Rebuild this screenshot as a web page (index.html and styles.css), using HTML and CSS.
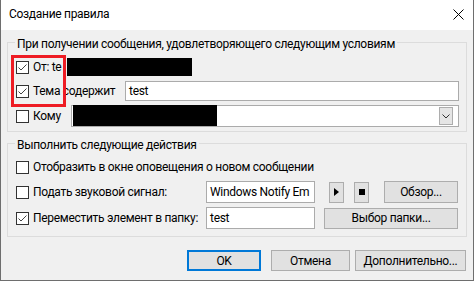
FILE: index.html
```html
<!DOCTYPE html>
<html lang="ru">
<head>
<meta charset="utf-8">
<title>Создание правила</title>
<link rel="stylesheet" href="styles.css">
</head>
<body>
<div class="window">
  <div class="titlebar">
    <span class="title">Создание правила</span>
    <svg class="close" width="11" height="11" viewBox="0 0 11 11"><path d="M0.5 0.5 L10.5 10.5 M10.5 0.5 L0.5 10.5" stroke="#000" stroke-width="1" fill="none"/></svg>
  </div>
  <div class="content">
    <fieldset class="group g1">
      <legend>При получении сообщения, удовлетворяющего следующим условиям</legend>
      <div class="rows">
        <div class="row r1">
          <label class="check w-from"><span class="box"><svg width="11" height="11" viewBox="0 0 11 11"><path d="M1.5 5.5 L4 8 L9.5 2.5" stroke="#444" stroke-width="1" fill="none"/></svg></span><span>От: te</span></label>
          <span class="redact redact-from"></span>
        </div>
        <div class="row r2">
          <label class="check w-subj"><span class="box"><svg width="11" height="11" viewBox="0 0 11 11"><path d="M1.5 5.5 L4 8 L9.5 2.5" stroke="#444" stroke-width="1" fill="none"/></svg></span><span>Тема содержит</span></label>
          <div class="textbox grow">test</div>
        </div>
        <div class="row r3">
          <label class="check w-to"><span class="box"></span><span>Кому</span></label>
          <div class="combo">
            <span class="redact redact-to"></span>
            <span class="drop"><svg width="8" height="5" viewBox="0 0 8 5"><path d="M0.5 0.5 L4 4 L7.5 0.5" stroke="#333" stroke-width="1" fill="none"/></svg></span>
          </div>
        </div>
        <div class="highlight"></div>
      </div>
    </fieldset>

    <fieldset class="group g2">
      <legend>Выполнить следующие действия</legend>
      <div class="rows">
        <div class="row a1">
          <label class="check"><span class="box"></span><span>Отобразить в окне оповещения о новом сообщении</span></label>
        </div>
        <div class="row a2">
          <label class="check w-act"><span class="box"></span><span>Подать звуковой сигнал:</span></label>
          <div class="textbox small">Windows Notify Em</div>
          <button class="btn mini play"><svg width="5" height="8" viewBox="0 0 5 8"><path d="M0 0 L5 4 L0 8 Z" fill="#000"/></svg></button>
          <button class="btn mini stop"><svg width="6" height="6" viewBox="0 0 6 6"><rect width="6" height="6" fill="#000"/></svg></button>
          <button class="btn browse">Обзор...</button>
        </div>
        <div class="row a3">
          <label class="check w-act"><span class="box"><svg width="11" height="11" viewBox="0 0 11 11"><path d="M1.5 5.5 L4 8 L9.5 2.5" stroke="#444" stroke-width="1" fill="none"/></svg></span><span>Переместить элемент в папку:</span></label>
          <div class="textbox small">test</div>
          <button class="btn folder">Выбор папки...</button>
        </div>
      </div>
    </fieldset>

    <div class="footer">
      <button class="btn ok">OK</button>
      <button class="btn cancel">Отмена</button>
      <button class="btn more">Дополнительно...</button>
    </div>
  </div>
</div>
</body>
</html>
```
FILE: styles.css
```css
* { box-sizing: border-box; }
html, body { margin: 0; padding: 0; }
body {
  width: 474px;
  height: 281px;
  overflow: hidden;
  background: #ffffff;
  font-family: Roboto, "Noto Sans", sans-serif;
  font-size: 12px;
  letter-spacing: -0.3px;
  color: #000;
}
.window {
  width: 474px;
  height: 281px;
  border: 1px solid #6e6e6e;
  border-top: none;
  background: #f0f0f0;
  display: flex;
  flex-direction: column;
}
.titlebar {
  height: 30px;
  flex: none;
  background: #ffffff;
  display: flex;
  align-items: center;
  justify-content: space-between;
  padding: 0 9px 1px 8px;
}
.title { line-height: 15px; }
.close { display: block; }

.content {
  flex: 1;
  padding: 2px 6px 0 6px;
  display: flex;
  flex-direction: column;
}
.group {
  margin: 0;
  min-width: 0;
  border: 1px solid #dcdcdc;
  padding: 6px 7px 4px 8px;
}
.group legend {
  padding: 5px 2px 0 2px;
  margin-left: -1px;
  line-height: 15px;
}
.g2 { margin-top: 1px; padding-top: 4px; padding-bottom: 7px; }
.rows { position: relative; display: flex; flex-direction: column; }
.row { display: flex; align-items: center; }
.r1 { height: 18px; margin-bottom: 5px; }
.r2 { height: 20px; margin-bottom: 4px; }
.r3 { height: 22px; }
.a1 { height: 20px; margin-bottom: 4px; }
.a2 { height: 22px; margin-bottom: 4px; }
.a3 { height: 22px; }

.check { display: flex; align-items: center; gap: 4px; flex: none; white-space: nowrap; }
.box {
  width: 13px; height: 13px; flex: none;
  border: 1px solid #333;
  background: #fff;
  display: block;
}
.box svg { display: block; }
.w-from { width: 51px; overflow: hidden; }
.w-subj { width: 109px; }
.w-to { width: 55px; }
.w-act { width: 190px; }

.redact { display: block; background: #000; flex: none; }
.redact-from { width: 125px; height: 18px; }
.redact-to { width: 144px; height: 21px; margin-left: 1px; margin-top: -1px; align-self: flex-start; }

.textbox {
  height: 100%;
  border: 1px solid #ababab;
  background: #fff;
  padding-left: 3px;
  display: flex;
  align-items: center;
  white-space: nowrap;
  overflow: hidden;
}
.grow { flex: 1; }
.small { width: 109px; flex: none; }
.a2 .small { margin-right: 14px; }
.a3 .small { margin-right: 9px; }

.combo {
  flex: 1;
  height: 22px;
  border: 1px solid #ababab;
  background: #fff;
  display: flex;
  align-items: center;
  justify-content: space-between;
  padding-right: 5px;
}
.drop {
  width: 14px; height: 18px;
  border: 1px solid #adadad;
  background: #e5e5e5;
  display: flex; align-items: center; justify-content: center;
}
.drop svg { display: block; }

.highlight {
  position: absolute;
  left: -5px;
  top: -3px;
  width: 55px;
  height: 52px;
  border: 3px solid #ee1c24;
  pointer-events: none;
}

.btn {
  font-family: inherit;
  font-size: 12px;
  letter-spacing: -0.3px;
  color: #000;
  background: #e1e1e1;
  border: 1px solid #adadad;
  border-radius: 0;
  padding: 0;
  margin: 0;
  height: 22px;
  display: flex;
  align-items: center;
  justify-content: center;
  flex: none;
}
.mini { width: 15px; height: 21px; }
.play { margin-right: 10px; }
.stop { margin-right: 15px; }
.btn svg { display: block; }
.browse { width: 74px; }
.folder { width: 134px; height: 21px; }

.footer {
  margin-top: 13px;
  display: flex;
  justify-content: flex-end;
  padding-right: 1px;
}
.footer .btn { height: 21px; }
.ok { width: 74px; border: 2px solid #0078d7; margin-right: 10px; }
.cancel { width: 79px; margin-right: 5px; }
.more { width: 111px; }
```
